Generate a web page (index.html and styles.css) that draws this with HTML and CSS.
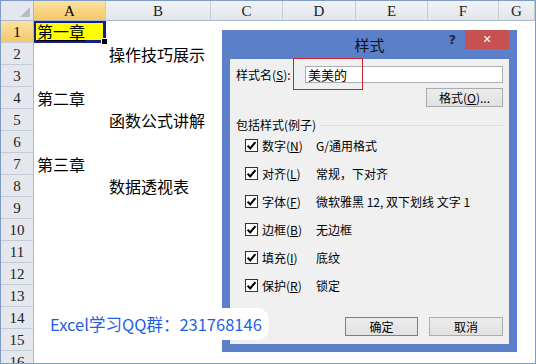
FILE: index.html
```html
<!DOCTYPE html>
<html lang="zh-CN">
<head>
<meta charset="utf-8">
<title>样式</title>
<link rel="stylesheet" href="styles.css">
</head>
<body>
<div class="page">
  <div class="sheet">
    <div class="corner"><i class="tri"></i></div>
    <div class="ch sel">A</div>
    <div class="ch">B</div>
    <div class="ch">C</div>
    <div class="ch">D</div>
    <div class="ch">E</div>
    <div class="ch">F</div>
    <div class="ch">G</div>

    <div class="rh sel">1</div><div class="c a1 colA"><span class="dbl">第一章</span></div>
    <div class="rh">2</div><div class="c colB">操作技巧展示</div>
    <div class="rh">3</div>
    <div class="rh">4</div><div class="c colA">第二章</div>
    <div class="rh">5</div><div class="c colB">函数公式讲解</div>
    <div class="rh">6</div>
    <div class="rh">7</div><div class="c colA">第三章</div>
    <div class="rh">8</div><div class="c colB">数据透视表</div>
    <div class="rh">9</div>
    <div class="rh">10</div>
    <div class="rh">11</div>
    <div class="rh">12</div>
    <div class="rh">13</div>
    <div class="rh">14</div>
    <div class="rh">15</div>
    <div class="rh">16</div>
  </div>

  <div class="dialog">
    <div class="titlebar">
      <div></div>
      <div class="title">样式</div>
      <div class="ctrls"><span class="help">?</span><span class="close">&#x2715;</span></div>
    </div>
    <div class="client">
      <div class="namerow">
        <span class="namelabel">样式名(<u>S</u>):</span>
        <div class="input">美美的</div>
      </div>
      <div class="fmtrow"><span class="btn fmt">格式(<u>O</u>)...</span></div>
      <div class="group"><span>包括样式(例子)</span><i class="gline"></i></div>
      <ul class="checks">
        <li><svg class="cb" width="13" height="13" viewBox="0 0 13 13"><rect x="0.5" y="0.5" width="12" height="12" fill="#fff" stroke="#333"/><path d="M2.6 6.6 L5.2 9.4 L10.4 3.2" fill="none" stroke="#000" stroke-width="2.1"/></svg><span class="lab">数字(<u>N</u>)</span><span class="desc">G/通用格式</span></li>
        <li><svg class="cb" width="13" height="13" viewBox="0 0 13 13"><rect x="0.5" y="0.5" width="12" height="12" fill="#fff" stroke="#333"/><path d="M2.6 6.6 L5.2 9.4 L10.4 3.2" fill="none" stroke="#000" stroke-width="2.1"/></svg><span class="lab">对齐(<u>L</u>)</span><span class="desc">常规，下对齐</span></li>
        <li><svg class="cb" width="13" height="13" viewBox="0 0 13 13"><rect x="0.5" y="0.5" width="12" height="12" fill="#fff" stroke="#333"/><path d="M2.6 6.6 L5.2 9.4 L10.4 3.2" fill="none" stroke="#000" stroke-width="2.1"/></svg><span class="lab">字体(<u>F</u>)</span><span class="desc">微软雅黑 12, 双下划线 文字 1</span></li>
        <li><svg class="cb" width="13" height="13" viewBox="0 0 13 13"><rect x="0.5" y="0.5" width="12" height="12" fill="#fff" stroke="#333"/><path d="M2.6 6.6 L5.2 9.4 L10.4 3.2" fill="none" stroke="#000" stroke-width="2.1"/></svg><span class="lab">边框(<u>B</u>)</span><span class="desc">无边框</span></li>
        <li><svg class="cb" width="13" height="13" viewBox="0 0 13 13"><rect x="0.5" y="0.5" width="12" height="12" fill="#fff" stroke="#333"/><path d="M2.6 6.6 L5.2 9.4 L10.4 3.2" fill="none" stroke="#000" stroke-width="2.1"/></svg><span class="lab">填充(<u>I</u>)</span><span class="desc">底纹</span></li>
        <li><svg class="cb" width="13" height="13" viewBox="0 0 13 13"><rect x="0.5" y="0.5" width="12" height="12" fill="#fff" stroke="#333"/><path d="M2.6 6.6 L5.2 9.4 L10.4 3.2" fill="none" stroke="#000" stroke-width="2.1"/></svg><span class="lab">保护(<u>R</u>)</span><span class="desc">锁定</span></li>
      </ul>
      <div class="btns">
        <span class="btn ok">确定</span>
        <span class="btn cancel">取消</span>
      </div>
    </div>
  </div>

  <div class="redbox"></div>
  <div class="watermark">Excel学习QQ群：231768146</div>
</div>
</body>
</html>
```

FILE: styles.css
```css
* { box-sizing: border-box; margin: 0; padding: 0; }
html, body { width: 536px; height: 364px; overflow: hidden; background: #fff; }
body { font-family: "Noto Sans CJK SC", sans-serif; color: #000; }

.page {
  position: relative;
  width: 536px;
  height: 364px;
  border: 1px solid #7f9cc4;
  overflow: hidden;
  background: #fff;
}

/* ---------- sheet ---------- */
.sheet {
  display: grid;
  grid-template-columns: 33px 72px 105px 72px 73px 72px 71px 1fr;
  grid-template-rows: 20px;
  grid-auto-rows: 22px;
}
.corner {
  background: #e4e8ee;
  border-right: 1px solid #a9b8ca;
  border-bottom: 1px solid #a9b8ca;
  display: flex;
  align-items: flex-end;
  justify-content: flex-end;
  padding: 0 3px 3px 0;
}
.tri {
  width: 0; height: 0;
  border-left: 10px solid transparent;
  border-bottom: 10px solid #b6bdc8;
}
.ch {
  background: linear-gradient(#f1f3f6, #e2e6ec);
  border-right: 1px solid #c3cbd6;
  border-bottom: 1px solid #a9b8ca;
  font-family: "Liberation Serif", serif;
  font-size: 15px;
  line-height: 20px;
  text-align: center;
  color: #222;
}
.rh {
  grid-column: 1;
  background: #e4e8ee;
  border-right: 1px solid #a9b8ca;
  border-bottom: 1px solid #c3cbd6;
  font-family: "Liberation Serif", serif;
  font-size: 15px;
  line-height: 22px;
  text-align: center;
  color: #222;
}
.ch.sel, .rh.sel {
  background: linear-gradient(#fbe2a2, #f6c766);
  color: #000;
}
.c {
  font-size: 16px;
  line-height: 22px;
  padding-left: 3px;
  white-space: nowrap;
}
.colA { grid-column: 2; }
.colB { grid-column: 3; }
.a1 {
  position: relative;
  background: #ffff00;
  border: 2px solid #14208a;
  border-right-width: 3px;
  border-bottom-width: 3px;
  padding-left: 1px;
  line-height: 17px;
}
.a1::after {
  content: "";
  position: absolute;
  right: -5px; bottom: -5px;
  width: 5px; height: 5px;
  background: #000;
  border: 1px solid #fff;
}
.dbl { text-decoration: underline; text-underline-offset: 2px; }

/* ---------- dialog ---------- */
.dialog {
  position: absolute;
  left: 221px;
  top: 29px;
  width: 295px;
  height: 322px;
  background: #5b7fc8;
  display: flex;
  flex-direction: column;
  padding: 0 8px 8px;
}
.titlebar {
  height: 29px;
  margin: 0 -8px;
  display: grid;
  grid-template-columns: 1fr auto 1fr;
  align-items: start;
}
.title {
  font-size: 15px;
  line-height: 29px;
  color: #111;
}
.ctrls {
  display: flex;
  justify-content: flex-end;
  align-items: flex-start;
  padding-right: 8px;
}
.help {
  font-family: "DejaVu Sans", sans-serif;
  font-weight: bold;
  font-size: 13px;
  line-height: 20px;
  color: #1e2a4a;
  margin-right: 9px;
}
.close {
  width: 44px;
  height: 19px;
  background: #c75050;
  color: #fff;
  font-family: "DejaVu Sans", sans-serif;
  font-weight: bold;
  font-size: 11px;
  line-height: 19px;
  text-align: center;
}
.client {
  flex: 1;
  background: #f0f0f0;
  padding: 7px 6px 8px 6px;
  font-size: 12px;
  display: flex;
  flex-direction: column;
}
.namerow {
  display: flex;
  align-items: center;
  height: 17px;
}
.namelabel { width: 69px; line-height: 17px; }
.input {
  width: 198px;
  height: 17px;
  background: #fff;
  border: 1px solid #abadb3;
  padding-left: 2px;
  line-height: 15px;
  font-size: 13px;
}
.fmtrow {
  display: flex;
  justify-content: flex-end;
  margin-top: 5px;
}
.btn {
  display: flex;
  align-items: center;
  justify-content: center;
  height: 19px;
  background: linear-gradient(#ececec, #e1e1e1);
  border: 1px solid #acacac;
  font-size: 12px;
  line-height: 17px;
}
.fmt { width: 77px; }
.group {
  display: flex;
  align-items: center;
  height: 14px;
  margin-top: 11px;
  line-height: 14px;
}
.gline {
  flex: 1;
  height: 1px;
  background: #dcdcdc;
  margin-left: 4px;
}
.checks {
  list-style: none;
  margin-top: -1px;
}
.checks li {
  display: flex;
  align-items: center;
  height: 28px;
  padding-left: 9px;
}
.cb { flex: none; }
.lab { width: 54px; margin-left: 4px; }
.desc { white-space: nowrap; }
.btns {
  display: flex;
  justify-content: flex-end;
  gap: 11px;
  margin-top: 18px;
}
.ok { width: 73px; border-color: #3c8ee0; }
.cancel { width: 74px; }

/* ---------- overlays ---------- */
.redbox {
  position: absolute;
  left: 292px;
  top: 57px;
  width: 70px;
  height: 32px;
  border: 1px solid #c8232c;
}
.watermark {
  position: absolute;
  left: 38px;
  top: 307px;
  width: 230px;
  height: 32px;
  background: #fff;
  border-radius: 12px;
  padding-left: 11px;
  font-size: 16.5px;
  line-height: 32px;
  color: #1e5fe6;
  white-space: nowrap;
}
```
